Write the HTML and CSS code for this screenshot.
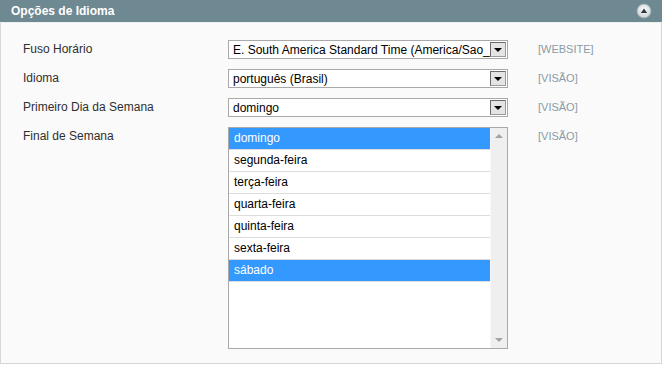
FILE: index.html
```html
<!DOCTYPE html>
<html>
<head>
    <meta charset="utf-8" />
    <title>Opções de Idioma</title>
    <link rel="stylesheet" href="styles.css">
</head>
<body>
    <div class="panel">
        <div class="panel-head">
            <span class="panel-title">Opções de Idioma</span>
            <span class="toggle">
                <svg width="16" height="16" viewBox="0 0 16 16">
                    <defs>
                        <radialGradient id="g" cx="50%" cy="40%" r="60%">
                            <stop offset="0" stop-color="#ffffff" />
                            <stop offset="1" stop-color="#c9d0d3" />
                        </radialGradient>
                    </defs>
                    <circle cx="8" cy="8" r="7" fill="url(#g)" stroke="#9aa9ae" stroke-width="0.8" />
                    <path d="M4.8 10 L8 5.6 L11.2 10 Z" fill="#2b3a42" />
                </svg>
            </span>
        </div>
        <div class="panel-body">
            <div class="row">
                <label class="label">Fuso Horário</label>
                <div class="select">
                    <span class="select-value">E. South America Standard Time (America/Sao_</span>
                    <span class="select-btn"><span class="arrow"></span></span>
                </div>
                <span class="scope">[WEBSITE]</span>
            </div>
            <div class="row">
                <label class="label">Idioma</label>
                <div class="select">
                    <span class="select-value">português (Brasil)</span>
                    <span class="select-btn"><span class="arrow"></span></span>
                </div>
                <span class="scope">[VISÃO]</span>
            </div>
            <div class="row">
                <label class="label">Primeiro Dia da Semana</label>
                <div class="select">
                    <span class="select-value">domingo</span>
                    <span class="select-btn"><span class="arrow"></span></span>
                </div>
                <span class="scope">[VISÃO]</span>
            </div>
            <div class="row">
                <label class="label">Final de Semana</label>
                <div class="listbox">
                    <ul class="options">
                        <li class="selected">domingo</li>
                        <li>segunda-feira</li>
                        <li>terça-feira</li>
                        <li>quarta-feira</li>
                        <li>quinta-feira</li>
                        <li>sexta-feira</li>
                        <li class="selected">sábado</li>
                    </ul>
                    <div class="scrollbar">
                        <span class="sb-up"></span>
                        <span class="sb-down"></span>
                    </div>
                </div>
                <span class="scope">[VISÃO]</span>
            </div>
        </div>
    </div>
</body>
</html>
```

FILE: styles.css
```css
* {
    box-sizing: border-box;
}

body {
    margin: 0;
    font-family: 'Liberation Sans', Arial, sans-serif;
    font-size: 12px;
    background: #ffffff;
}

.panel {
    width: 662px;
    height: 364px;
    border: 1px solid #d6d6d6;
    border-top: none;
    background: #fafafa;
}

.panel-head {
    height: 23px;
    margin: 0 -1px;
    background: #6f8992;
    border-bottom: 1px solid #eef1f2;
    display: flex;
    align-items: center;
    justify-content: space-between;
    padding: 0 11px 0 11px;
}

.panel-title {
    color: #ffffff;
    font-weight: bold;
    font-size: 12px;
}

.toggle {
    display: flex;
    margin-right: -1px;
}

.panel-body {
    padding: 17px 0 0 22px;
}

.row {
    display: flex;
    align-items: flex-start;
    margin-bottom: 10px;
}

.label {
    width: 205px;
    line-height: 19px;
    color: #2f2f2f;
}

.select {
    width: 280px;
    height: 19px;
    border: 1px solid #a9a9a9;
    background: #ffffff;
    display: flex;
    align-items: center;
    overflow: hidden;
}

.select-value {
    flex: 1;
    padding-left: 4px;
    white-space: nowrap;
    overflow: hidden;
    color: #000000;
}

.select-btn {
    width: 16px;
    height: 15px;
    margin-right: 1px;
    background: #e4e4e4;
    border: 1px solid #6a6a6a;
    border-right-color: #9a9a9a;
    border-bottom-color: #9a9a9a;
    display: flex;
    align-items: center;
    justify-content: center;
}

.arrow {
    width: 0;
    height: 0;
    border-left: 4px solid transparent;
    border-right: 4px solid transparent;
    border-top: 4px solid #000000;
    margin-top: 1px;
}

.scope {
    margin-left: 30px;
    line-height: 19px;
    font-size: 11px;
    color: #8a9aa6;
}

.listbox {
    width: 280px;
    height: 222px;
    border: 1px solid #a9a9a9;
    background: #ffffff;
    display: flex;
}

.options {
    list-style: none;
    margin: 0;
    padding: 0;
    flex: 1;
}

.options li {
    height: 22px;
    line-height: 21px;
    padding-left: 5px;
    border-bottom: 1px solid #dcdcdc;
    color: #000000;
}

.options li.selected {
    background: #3399ff;
    color: #ffffff;
}

.scrollbar {
    width: 17px;
    background: #efefef;
    border-left: 1px solid #f7f7f7;
    display: flex;
    flex-direction: column;
    justify-content: space-between;
    align-items: center;
    padding: 6px 0 6px;
}

.sb-up, .sb-down {
    width: 0;
    height: 0;
    border-left: 4px solid transparent;
    border-right: 4px solid transparent;
}

.sb-up {
    border-bottom: 4px solid #a3a3a3;
}

.sb-down {
    border-top: 4px solid #a3a3a3;
}
```
